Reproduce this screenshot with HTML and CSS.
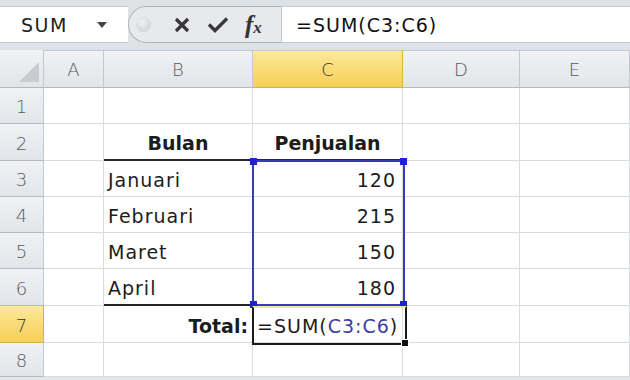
FILE: index.html
```html
<!DOCTYPE html>
<html lang="id">
<head>
  <meta charset="UTF-8">
  <title>SUM</title>
  <link rel="stylesheet" href="styles.css">
</head>
<body>

  <div class="fbar">
    <div class="namebox">
      <span class="name">SUM</span>
      <svg class="caret" width="10" height="6" viewBox="0 0 10 6"><path d="M0 0h10L5 6z"/></svg>
    </div>
    <div class="tools">
      <span class="knob"></span>
      <svg class="xicon" width="16" height="16" viewBox="0 0 16 16"><path d="M2 2L14 14M14 2L2 14"/></svg>
      <svg class="check" width="22" height="17" viewBox="0 0 22 17"><path d="M2 8.5L8 14.5L20 2.5"/></svg>
      <span class="fx">f<span>x</span></span>
    </div>
    <div class="formula">=SUM(C3:C6)</div>
  </div>

  <div class="sheet">
    <div class="corner"><span></span></div>
    <div class="ch">A</div>
    <div class="ch">B</div>
    <div class="ch sel">C</div>
    <div class="ch">D</div>
    <div class="ch">E</div>

    <div class="rh">1</div><div class="c"></div><div class="c"></div><div class="c"></div><div class="c"></div><div class="c"></div>

    <div class="rh">2</div><div class="c"></div>
    <div class="c bold center bb">Bulan</div>
    <div class="c bold center bb">Penjualan</div>
    <div class="c"></div><div class="c"></div>

    <div class="rh">3</div><div class="c"></div><div class="c">Januari</div><div class="c num">120</div><div class="c"></div><div class="c"></div>
    <div class="rh">4</div><div class="c"></div><div class="c">Februari</div><div class="c num">215</div><div class="c"></div><div class="c"></div>
    <div class="rh">5</div><div class="c"></div><div class="c">Maret</div><div class="c num">150</div><div class="c"></div><div class="c"></div>
    <div class="rh">6</div><div class="c"></div><div class="c bb">April</div><div class="c num bb">180</div><div class="c"></div><div class="c"></div>

    <div class="rh sel">7</div><div class="c"></div>
    <div class="c bold num total">Total:</div>
    <div class="c">=SUM(<span class="ref">C3:C6</span>)</div>
    <div class="c"></div><div class="c"></div>

    <div class="rh">8</div><div class="c"></div><div class="c"></div><div class="c"></div><div class="c"></div><div class="c"></div>

    <div class="range">
      <i class="h tl"></i><i class="h tr"></i><i class="h bl"></i><i class="h br"></i>
    </div>
    <div class="active"><i class="fill"></i></div>
  </div>

</body>
</html>
```

FILE: styles.css
```css
body {
  margin: 0;
  width: 630px;
  height: 380px;
  overflow: hidden;
  background: #e3e6ea;
  font-family: 'DejaVu Sans', sans-serif;
  color: #1c1c1c;
}

.fbar {
  display: flex;
  height: 50px;
  padding: 6px 0 7px;
  box-sizing: border-box;
  background: #dde2e8;
}

.namebox {
  width: 128px;
  display: flex;
  align-items: center;
  background: #fff;
  border-top: 1px solid #c3c9d0;
  border-bottom: 1px solid #c3c9d0;
  box-sizing: border-box;
}
.name {
  margin-left: 21px;
  font-size: 19px;
  letter-spacing: 1.5px;
  color: #222;
}
.caret { margin-left: 29px; fill: #444; }

.tools {
  width: 153px;
  display: flex;
  align-items: center;
  background: #e7e9ec;
  border: 1px solid #aeb3ba;
  border-right: none;
  border-radius: 19px 0 0 19px;
  box-sizing: border-box;
}
.knob {
  width: 15px;
  height: 15px;
  margin-left: 7px;
  border-radius: 50%;
  background: radial-gradient(circle at 40% 35%, #f0f1f3, #c6cacf);
}
.xicon { margin-left: 23px; stroke: #383838; stroke-width: 3.2; fill: none; }
.check { margin-left: 17px; stroke: #383838; stroke-width: 3.4; fill: none; }
.fx {
  margin-left: 16px;
  font-family: 'Liberation Serif', serif;
  font-style: italic;
  font-weight: bold;
  font-size: 25px;
  color: #333;
}
.fx span { font-size: 17px; }

.formula {
  flex: 1;
  display: flex;
  align-items: center;
  padding-left: 14px;
  background: #fff;
  border: 1px solid #c3c9d0;
  border-right: none;
  font-size: 19px;
  letter-spacing: 1px;
  color: #111;
}

.sheet {
  position: relative;
  display: grid;
  grid-template-columns: 44px 60px 149px 150px 117px 110px;
  grid-template-rows: 38px 36px 37px 36px 36px 36px 37px 37px 34px;
  background: #fff;
}

.corner, .ch, .rh {
  display: flex;
  align-items: center;
  justify-content: center;
  background: linear-gradient(#f0f2f4, #e1e5ea);
  border-right: 1px solid #c2c8cf;
  border-bottom: 1px solid #b2b9c2;
  box-sizing: border-box;
  font-size: 18px;
  font-weight: 300;
  color: #5a5a5a;
}
.corner {
  justify-content: flex-end;
  align-items: flex-end;
  padding: 0 4px 5px 0;
}
.corner span {
  width: 0;
  height: 0;
  border-left: 20px solid transparent;
  border-bottom: 20px solid #c7ccd2;
}
.ch { border-top: 1px solid #c2c8cf; }
.rh { padding-top: 2px; }
.ch.sel, .rh.sel {
  background: linear-gradient(#fde99a, #f6cf55);
  color: #333;
  border-right-color: #d9b43e;
  border-bottom-color: #d9b43e;
}

.c {
  display: flex;
  align-items: center;
  padding: 3px 4px 0;
  border-right: 1px solid #d8dbdf;
  border-bottom: 1px solid #d8dbdf;
  box-sizing: border-box;
  font-size: 19px;
  letter-spacing: 1px;
  white-space: nowrap;
}
.bold { font-weight: bold; letter-spacing: 0; }
.center { justify-content: center; }
.num { justify-content: flex-end; padding-right: 6px; }
.total { padding-right: 4px; }
.bb { border-bottom: 2px solid #262626; }
.ref { color: #3d3da8; }

.range {
  position: absolute;
  left: 252px;
  top: 110px;
  width: 153px;
  height: 146px;
  border: 2px solid #3b3bb8;
  box-sizing: border-box;
}
.h {
  position: absolute;
  width: 7px;
  height: 7px;
  background: #1f1fd6;
}
.tl { left: -4px; top: -4px; }
.tr { right: -4px; top: -4px; }
.bl { left: -4px; bottom: -4px; }
.br { right: -4px; bottom: -4px; }

.active {
  position: absolute;
  left: 252px;
  top: 256px;
  width: 155px;
  height: 39px;
  border: 2px solid #1a1a1a;
  border-top-color: #ecea9c;
  box-sizing: border-box;
}
.fill {
  position: absolute;
  right: -4px;
  bottom: -4px;
  width: 6px;
  height: 6px;
  background: #111;
  border: 1px solid #fff;
}
```
